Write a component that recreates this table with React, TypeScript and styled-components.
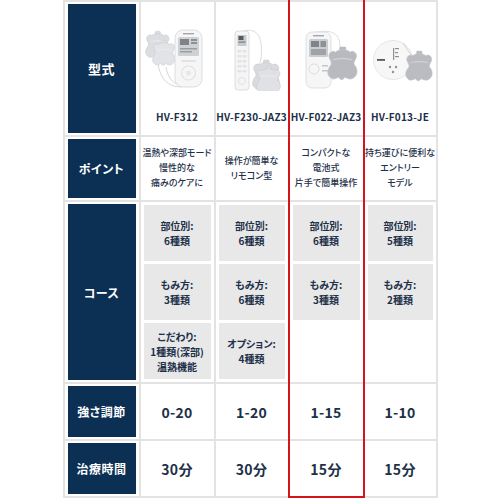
import React from 'react';
import styled, { createGlobalStyle } from 'styled-components';

const GlobalStyle = createGlobalStyle`
  html, body { margin: 0; padding: 0; background: #ffffff; }
  body {
    font-family: "Noto Sans CJK JP", "Noto Sans", sans-serif;
    font-feature-settings: "palt";
  }
`;

const NAVY = '#0c3054';
const INK = '#1d3049';
const LINE = '#e3e3e3';

const Table = styled.div`
  display: grid;
  grid-template-columns: 74px 73px 72px 73px 71px;
  grid-template-rows: 133px 63px 180px 55px 55px;
  gap: 2px;
  padding: 2px;
  width: 375px;
  box-sizing: border-box;
  margin: 0 auto;
  background: ${LINE};
`;

const Cell = styled.div<{ $r: number; $c: number }>`
  grid-row: ${p => p.$r};
  grid-column: ${p => p.$c};
  background: #ffffff;
  padding: 2px 3px;
  box-sizing: border-box;
  display: flex;
  flex-direction: column;
  align-items: center;
  justify-content: center;
  color: ${INK};
  min-width: 0;
`;

const HeadLabel = styled.div<{ $size?: number }>`
  width: 100%;
  height: 100%;
  background: ${NAVY};
  color: #ffffff;
  font-weight: 700;
  font-size: ${p => p.$size ?? 12}px;
  display: flex;
  align-items: center;
  justify-content: center;
  letter-spacing: 0.5px;
`;

const ProductCell = styled(Cell)`
  justify-content: flex-start;
  padding: 27px 0 11px;
`;

const Picture = styled.div`
  height: 62px;
  display: flex;
  align-items: center;
  justify-content: center;
`;

const ModelName = styled.div`
  margin-top: auto;
  font-size: 10px;
  font-weight: 700;
  line-height: 14px;
  white-space: nowrap;
  letter-spacing: 0.2px;
`;

const PointCell = styled(Cell)`
  padding: 2px 0;
`;

const PointLine = styled.div`
  font-size: 9px;
  font-weight: 500;
  line-height: 14.7px;
  white-space: nowrap;
  text-align: center;
`;

const CourseCell = styled(Cell)`
  padding: 3px;
  justify-content: flex-start;
  gap: 3px;
`;

const CourseBox = styled.div<{ $empty?: boolean }>`
  width: 100%;
  height: 56px;
  flex: none;
  background: ${p => (p.$empty ? 'transparent' : '#e8e8e8')};
  display: flex;
  flex-direction: column;
  align-items: center;
  justify-content: center;
`;

const CourseLine = styled.div`
  font-size: 10px;
  font-weight: 700;
  line-height: 15px;
  white-space: nowrap;
`;

const BigValue = styled.div`
  font-size: 14px;
  font-weight: 700;
  letter-spacing: 0.3px;
`;

const Highlight = styled.div`
  grid-column: 4;
  grid-row: 1 / 6;
  margin: -10px -2px -2px;
  border: 2px solid #d3141d;
  position: relative;
  z-index: 1;
  pointer-events: none;
`;

const PAD =
  'M8 3 C11 0 19 0 22 3 C24 1 29 3 28 8 C27 11 25 12 26 15 C29 18 30 24 26 27 C23 30 19 28 17 27 C15 30 13 30 11 27 C9 28 5 30 3 27 C-1 24 1 18 4 15 C5 12 3 11 2 8 C1 3 6 1 8 3 Z';

const Pad = ({ x, y, s = 1, fill }: { x: number; y: number; s?: number; fill: string }) => (
  <g transform={`translate(${x} ${y}) scale(${s})`}>
    <rect x={12} y={-2} width={6} height={6} rx={1} fill={fill} stroke="#c4c5ca" strokeWidth={0.5} />
    <path d={PAD} fill={fill} stroke="#c4c5ca" strokeWidth={0.6} />
    <path d="M6 10 Q15 8 24 10" fill="none" stroke="#ffffff" strokeOpacity={0.5} strokeWidth={0.8} />
  </g>
);

const ImgF312 = () => (
  <svg width="66" height="62" viewBox="0 0 66 62">
    <path d="M14 34 C16 50 24 58 38 58" fill="none" stroke="#c9cace" strokeWidth={0.8} />
    <path d="M22 38 C24 50 30 56 40 57" fill="none" stroke="#c9cace" strokeWidth={0.8} />
    <Pad x={1} y={4} s={0.85} fill="#dcdde1" />
    <Pad x={8} y={13} s={0.8} fill="#e2e3e6" />
    <rect x={31} y={1} width={27} height={57} rx={8} fill="#f6f6f7" stroke="#d6d7db" strokeWidth={0.8} />
    <rect x={39} y={4} width={11} height={1.4} fill="#a5a6aa" />
    <rect x={34} y={8} width={21} height={19} rx={1.5} fill="#cfd2d5" />
    <rect x={36} y={10} width={9} height={6} fill="#7f8387" />
    <rect x={47} y={10} width={6} height={2} fill="#8d9094" />
    <rect x={47} y={13} width={6} height={2} fill="#8d9094" />
    <rect x={36} y={19} width={17} height={1.5} fill="#9a9da1" />
    <rect x={36} y={22} width={12} height={1.5} fill="#9a9da1" />
    <rect x={37} y={31} width={15} height={2} rx={1} fill="#e2e3e6" />
    <circle cx={44.5} cy={44} r={7} fill="none" stroke="#e0e1e4" strokeWidth={1.2} />
    <circle cx={44.5} cy={44} r={2.5} fill="#e6e7ea" />
  </svg>
);

const ImgF230 = () => (
  <svg width="66" height="62" viewBox="0 0 66 62">
    <path d="M24 2 C40 -2 44 10 42 30 C41 36 38 40 36 44" fill="none" stroke="#d2d3d7" strokeWidth={0.8} />
    <rect x={16} y={2} width={14} height={59} rx={3} fill="#f5f5f6" stroke="#d5d6da" strokeWidth={0.8} />
    <rect x={18.5} y={6} width={9} height={11} fill="#c6c9cc" />
    <rect x={19.5} y={7} width={5} height={4} fill="#55595e" />
    <rect x={19.5} y={12.5} width={7} height={1.2} fill="#7a7e83" />
    {[21, 26, 31, 36, 41].map(y => (
      <g key={y}>
        <rect x={18.5} y={y} width={4} height={2.4} rx={0.8} fill="#e2e3e6" />
        <rect x={23.5} y={y} width={4} height={2.4} rx={0.8} fill="#e2e3e6" />
      </g>
    ))}
    <circle cx={23} cy={52} r={3.5} fill="none" stroke="#dfe0e3" strokeWidth={1} />
    <Pad x={33} y={33} s={0.95} fill="#dadbdf" />
    <Pad x={37} y={39} s={0.85} fill="#e0e1e4" />
  </svg>
);

const ImgF022 = () => (
  <svg width="66" height="62" viewBox="0 0 66 62">
    <path d="M20 4 C36 0 48 2 47 20" fill="none" stroke="#d4d5d9" strokeWidth={0.8} />
    <rect x={13} y={3} width={25} height={56} rx={6} fill="#f6f6f7" stroke="#d7d8dc" strokeWidth={0.8} />
    <rect x={20} y={6} width={11} height={1.4} fill="#a5a6aa" />
    <rect x={16} y={10} width={19} height={18} rx={1.5} fill="#cacdd0" />
    <rect x={18} y={12} width={8} height={6} fill="#80848a" />
    <rect x={27.5} y={12} width={5.5} height={6} fill="#8e9196" />
    <rect x={18} y={20} width={15} height={6} fill="#9fa2a6" />
    <circle cx={21} cy={40} r={5} fill="none" stroke="#dcdde0" strokeWidth={1} />
    <rect x={29} y={36} width={6} height={1.5} fill="#c4c5c9" />
    <rect x={29} y={41} width={6} height={1.5} fill="#c4c5c9" />
    <Pad x={34} y={20} s={1.05} fill="#b9bac0" />
  </svg>
);

const ImgF013 = () => (
  <svg width="66" height="62" viewBox="0 0 66 62">
    <circle cx={26} cy={31} r={19.5} fill="#f7f7f8" stroke="#dfe0e3" strokeWidth={0.8} />
    <rect x={10} y={30} width={8} height={1.8} fill="#55595e" />
    <rect x={26} y={19} width={1.2} height={12} fill="#8e9196" />
    <rect x={28} y={19} width={4} height={1.2} fill="#8e9196" />
    <rect x={28} y={23} width={3} height={1.2} fill="#8e9196" />
    <rect x={28} y={27} width={4} height={1.2} fill="#8e9196" />
    <circle cx={23} cy={38} r={1.2} fill="#8e9196" />
    <circle cx={29} cy={38} r={1.2} fill="#8e9196" />
    <circle cx={26} cy={43} r={1.2} fill="#8e9196" />
    <path d="M36 14 C40 20 42 24 46 27" fill="none" stroke="#c9cace" strokeWidth={0.8} />
    <Pad x={38} y={24} s={0.95} fill="#bbbcc1" />
  </svg>
);

type Product = {
  name: string;
  Img: () => React.ReactElement;
  point: string[];
  course: string[][];
  strength: string;
  time: string;
};

const products: Product[] = [
  {
    name: 'HV-F312',
    Img: ImgF312,
    point: ['温熱や深部モード', '慢性的な', '痛みのケアに'],
    course: [['部位別:', '6種類'], ['もみ方:', '3種類'], ['こだわり:', '1種類(深部)', '温熱機能']],
    strength: '0-20',
    time: '30分',
  },
  {
    name: 'HV-F230-JAZ3',
    Img: ImgF230,
    point: ['操作が簡単な', 'リモコン型'],
    course: [['部位別:', '6種類'], ['もみ方:', '6種類'], ['オプション:', '4種類']],
    strength: '1-20',
    time: '30分',
  },
  {
    name: 'HV-F022-JAZ3',
    Img: ImgF022,
    point: ['コンパクトな', '電池式', '片手で簡単操作'],
    course: [['部位別:', '6種類'], ['もみ方:', '3種類']],
    strength: '1-15',
    time: '15分',
  },
  {
    name: 'HV-F013-JE',
    Img: ImgF013,
    point: ['持ち運びに便利な', 'エントリー', 'モデル'],
    course: [['部位別:', '5種類'], ['もみ方:', '2種類']],
    strength: '1-10',
    time: '15分',
  },
];

export default function App() {
  return (
    <>
      <GlobalStyle />
      <Table>
        <Cell $r={1} $c={1}>
          <HeadLabel $size={13}>型式</HeadLabel>
        </Cell>
        {products.map((p, i) => (
          <ProductCell key={p.name} $r={1} $c={i + 2}>
            <Picture>
              <p.Img />
            </Picture>
            <ModelName>{p.name}</ModelName>
          </ProductCell>
        ))}

        <Cell $r={2} $c={1}>
          <HeadLabel>ポイント</HeadLabel>
        </Cell>
        {products.map((p, i) => (
          <PointCell key={p.name} $r={2} $c={i + 2}>
            {p.point.map(line => (
              <PointLine key={line}>{line}</PointLine>
            ))}
          </PointCell>
        ))}

        <Cell $r={3} $c={1}>
          <HeadLabel>コース</HeadLabel>
        </Cell>
        {products.map((p, i) => (
          <CourseCell key={p.name} $r={3} $c={i + 2}>
            {[0, 1, 2].map(k => {
              const lines = p.course[k];
              return (
                <CourseBox key={k} $empty={!lines}>
                  {lines?.map(line => (
                    <CourseLine key={line}>{line}</CourseLine>
                  ))}
                </CourseBox>
              );
            })}
          </CourseCell>
        ))}

        <Cell $r={4} $c={1}>
          <HeadLabel>強さ調節</HeadLabel>
        </Cell>
        {products.map((p, i) => (
          <Cell key={p.name} $r={4} $c={i + 2}>
            <BigValue>{p.strength}</BigValue>
          </Cell>
        ))}

        <Cell $r={5} $c={1}>
          <HeadLabel>治療時間</HeadLabel>
        </Cell>
        {products.map((p, i) => (
          <Cell key={p.name} $r={5} $c={i + 2}>
            <BigValue>{p.time}</BigValue>
          </Cell>
        ))}

        <Highlight />
      </Table>
    </>
  );
}
